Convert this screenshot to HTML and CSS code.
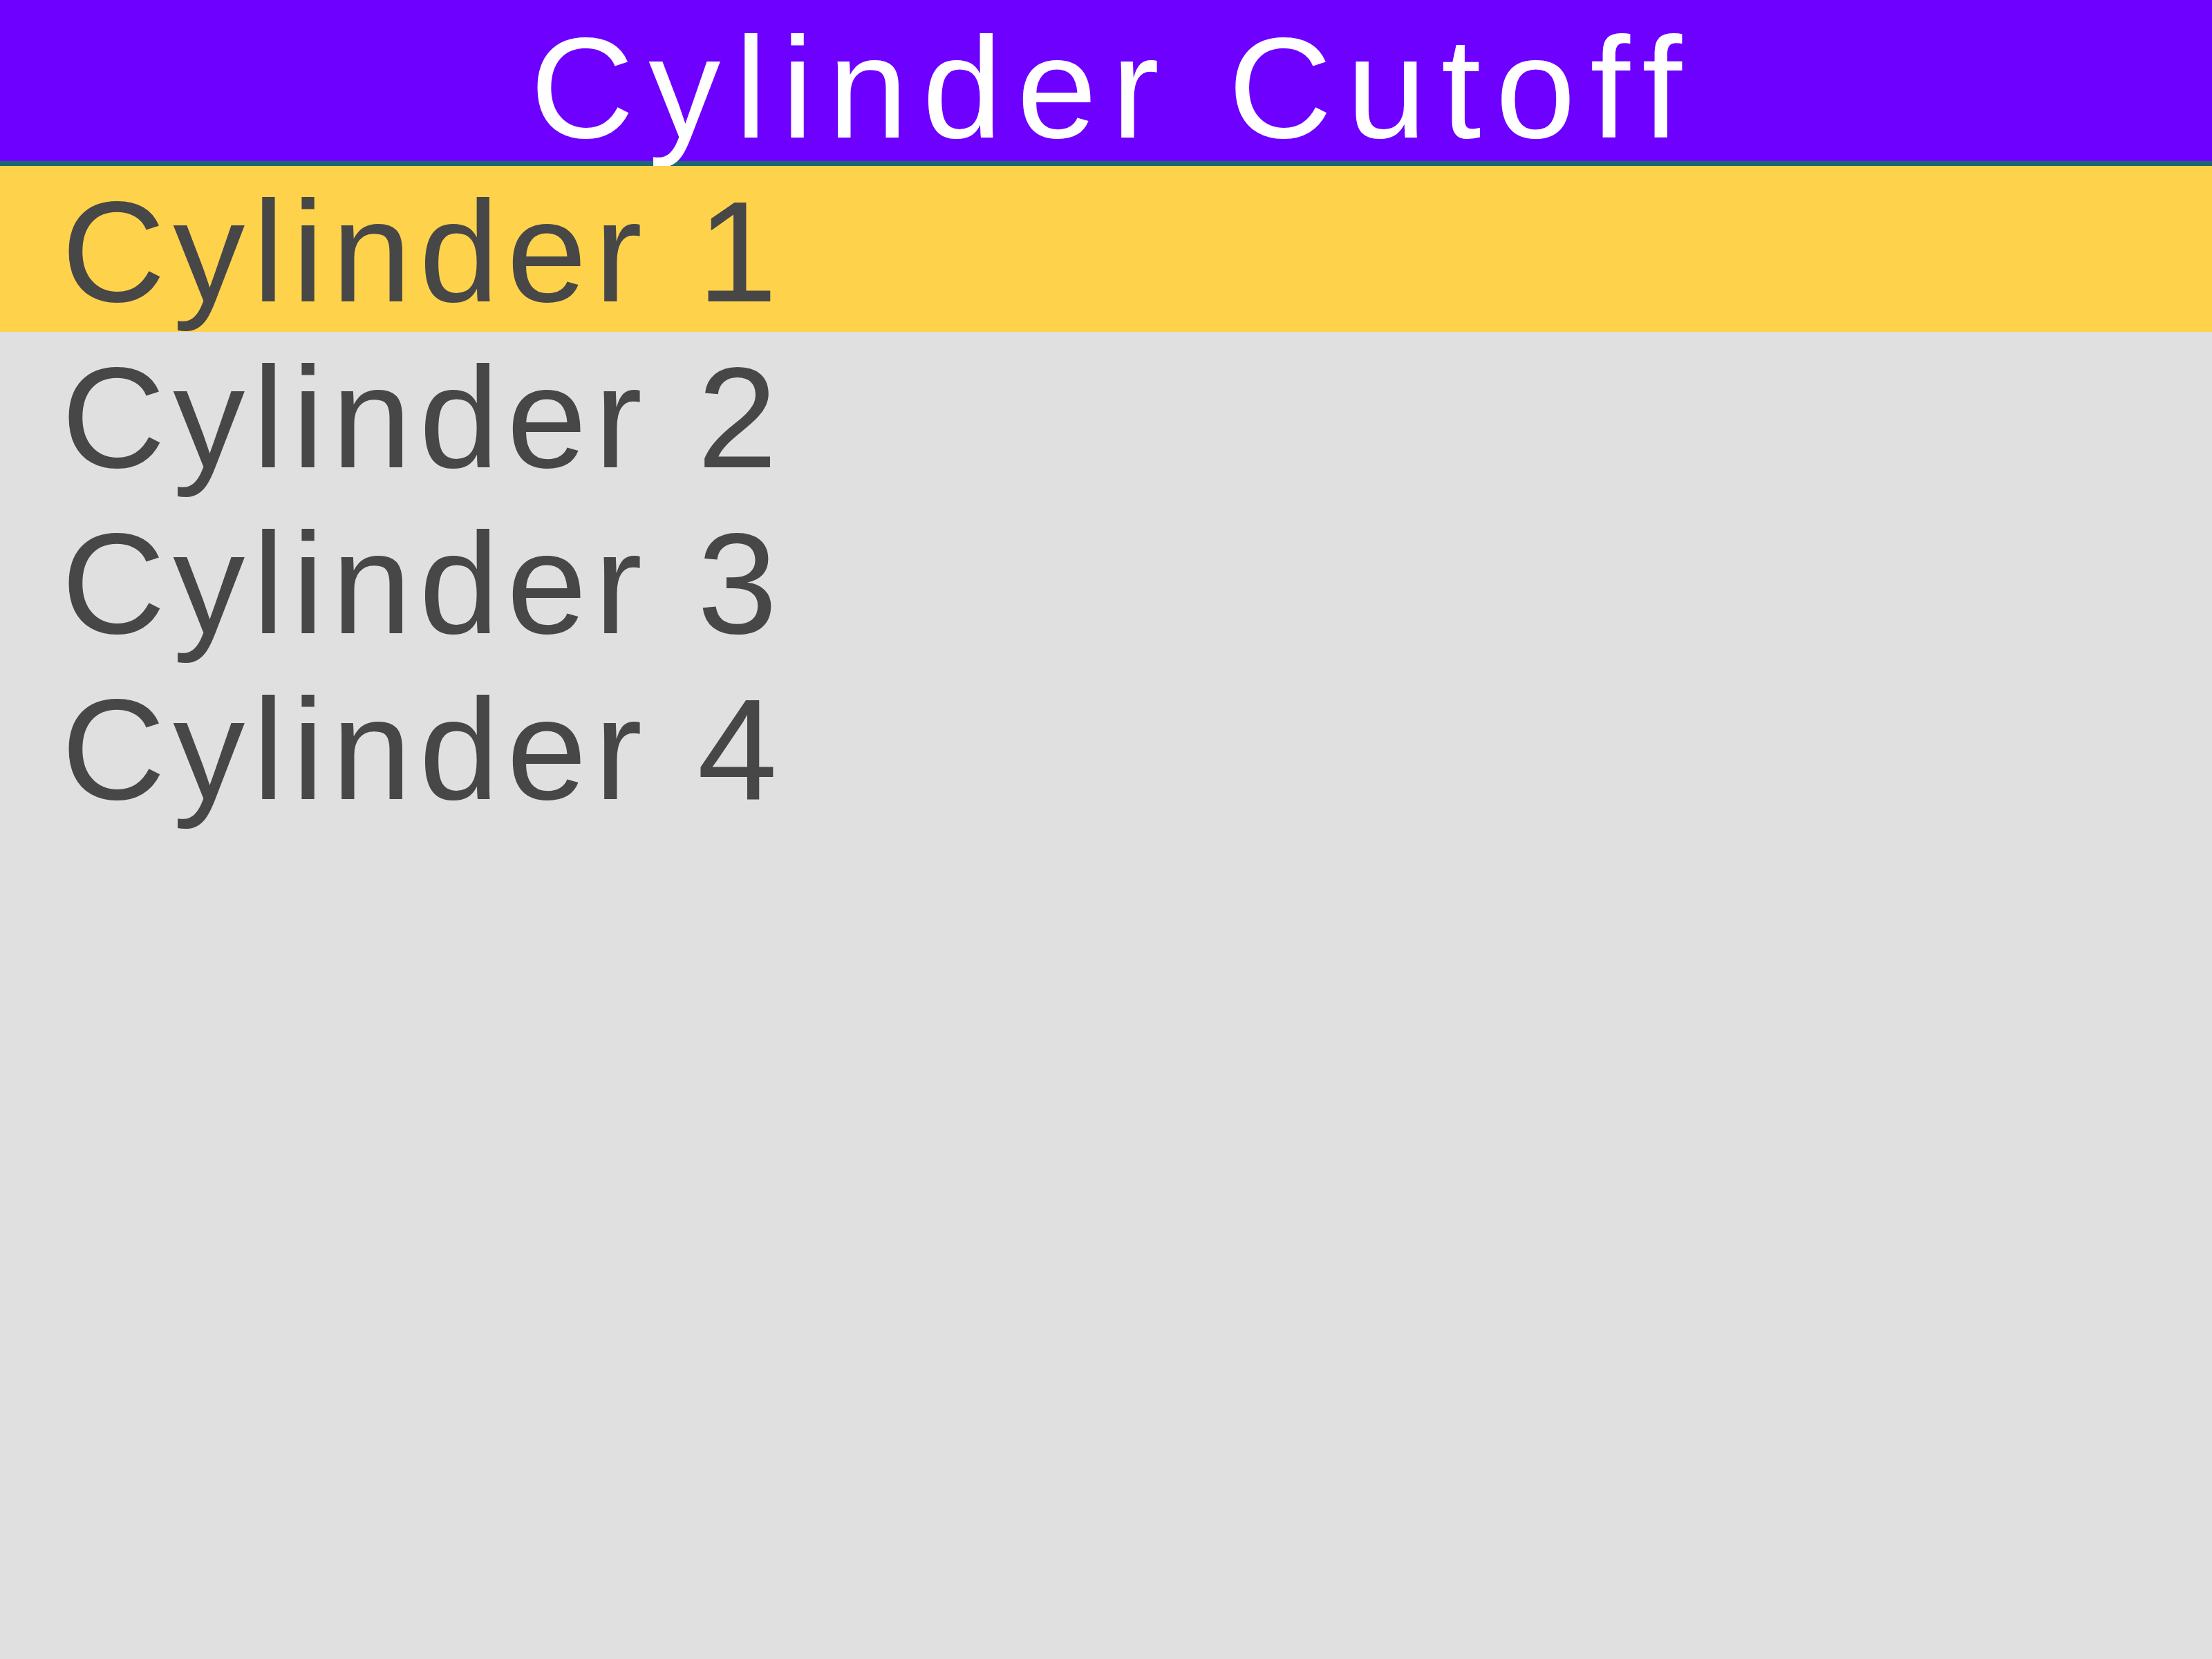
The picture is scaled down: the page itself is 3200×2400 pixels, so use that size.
FILE: index.html
```html
<!DOCTYPE html>
<html lang="en">
<head>
    <meta charset="UTF-8">
    <meta name="viewport" content="width=device-width, initial-scale=1.0">
    <title>Cylinder Cutoff</title>
    <link rel="stylesheet" href="styles.css">
</head>
<body>
    <header class="title-bar">
        <h1 class="title">Cylinder Cutoff</h1>
    </header>
    <ul class="cylinder-list">
        <li class="cylinder selected">Cylinder 1</li>
        <li class="cylinder">Cylinder 2</li>
        <li class="cylinder">Cylinder 3</li>
        <li class="cylinder">Cylinder 4</li>
    </ul>
</body>
</html>
```

FILE: styles.css
```css
body {
    font-family: 'Liberation Sans', Arial, sans-serif;
    background-color: #e0e0e0;
    margin: 0;
    padding: 0;
    min-height: 100vh;
}
.title-bar {
    background-color: #6e00ff;
    border-bottom: 7px solid #1b6870;
    height: 240px;
    box-sizing: border-box;
}
.title {
    margin: 0;
    padding: 11px 0 0 21px;
    color: #ffffff;
    font-size: 208px;
    font-weight: normal;
    line-height: 233px;
    letter-spacing: 21px;
    text-align: center;
    white-space: nowrap;
}
.cylinder-list {
    position: relative;
    list-style: none;
    margin: 0;
    padding: 0;
}
.cylinder {
    height: 240px;
    box-sizing: border-box;
    padding: 8px 0 0 89px;
    color: #474747;
    font-size: 208px;
    line-height: 232px;
    letter-spacing: 11px;
    white-space: nowrap;
}
.cylinder.selected {
    background-color: #ffd24c;
}
```
